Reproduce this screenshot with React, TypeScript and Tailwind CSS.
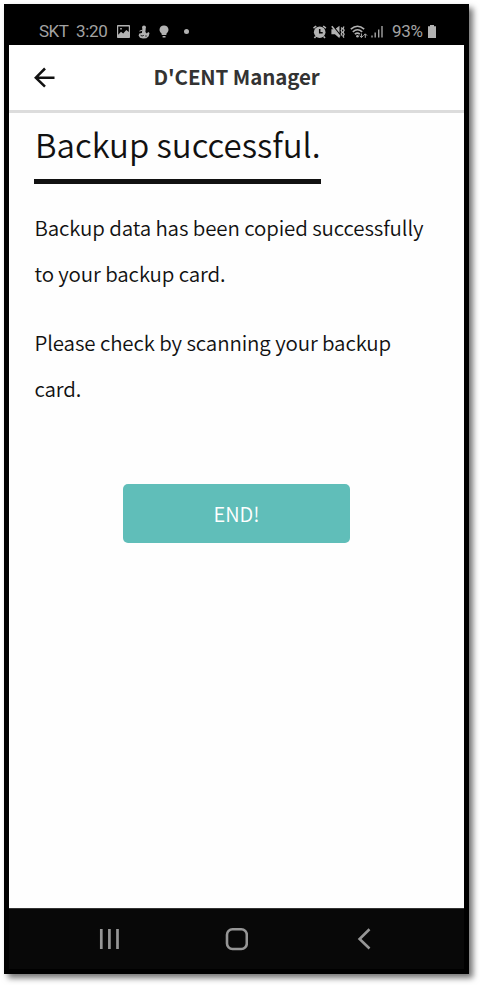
import type { ReactNode } from "react";

function Glyph({ w, h, className = "", children }: { w: number; h: number; className?: string; children: ReactNode }) {
  return (
    <svg width={w} height={h} viewBox={`0 0 ${w} ${h}`} className={`block shrink-0 ${className}`} fill="none">
      {children}
    </svg>
  );
}

function StatusBar() {
  return (
    <div className="flex h-9 shrink-0 items-center pt-[9px] pl-[30px] font-['Roboto',sans-serif] text-[17px] leading-none text-[#a3a3a3]">
      <span className="w-[37px] whitespace-nowrap tracking-[-0.5px]">SKT</span>
      <span className="w-[41px] whitespace-nowrap tracking-[-0.3px]">3:20</span>
      <Glyph w={13} h={13}>
        <path fillRule="evenodd" fill="#b2b2b2" d="M.8 0h11.400q.8 0 .8.8v11.400q0 .8-.8.8H.8q-.8 0-.8-.8V.8Q0 0 .8 0ZM1.200 1.400v8.400L4 6.800l2.200 1.800 3.100-3.700 2.500 2V1.400ZM3.200 3h1.600v1.600H3.200Z" />
      </Glyph>
      <Glyph w={12} h={14} className="ml-[8px]">
        <circle cx="6" cy="2.400" r="2" fill="#b2b2b2" />
        <path fill="#b2b2b2" d="m4.500 3.500 3.200.3-.3 3.300 1.300 1.400 1.500-1.500 1.300 1-.8 3.300-2.300 1.900-3.400.4-3-.9L.6 10.500l.7-1.900 2.600-.7Z" />
        <path d="M1.500 6.200 4.700 5" stroke="#b2b2b2" strokeWidth="1" />
        <path d="M2.600 10.300q1.400 1.400 3.200.1M7.200 11h1.600" stroke="#111" strokeWidth=".9" />
      </Glyph>
      <Glyph w={10} h={14} className="ml-[9px]">
        <path fill="#b2b2b2" d="M5 .4a4.400 4.400 0 0 1 4.500 4.300c0 2-1.300 2.900-2.100 4v1.300H2.700V8.700C1.800 7.600.5 6.700.5 4.700A4.400 4.400 0 0 1 5 .4ZM3.600 11h2.900v1.500H3.600Z" />
      </Glyph>
      <span className="ml-[15px] size-[5px] rounded-full bg-[#b2b2b2]" />
      <Glyph w={14} h={14} className="ml-[124px]">
        <circle cx="6.700" cy="7.200" r="5.800" fill="#b2b2b2" />
        <path d="M.5 3.200 3.200 1M12.900 3.200 10.200 1M2.700 11.500l-1.300 1.600M10.700 11.500l1.300 1.600" stroke="#b2b2b2" strokeWidth="1.600" />
        <path d="M6.700 4v3.700h3" stroke="#050505" strokeWidth="1.500" />
      </Glyph>
      <Glyph w={14} h={14} className="ml-[4px]">
        <path fill="#b2b2b2" d="M.4 4.200h2.500l5.600 6.500v2.500L3.900 9.200H.4ZM4.800 3.500 8.500.8v7.200Z" />
        <path d="M.8 1.200 9 11.500" stroke="#b2b2b2" strokeWidth="1.600" />
        <path d="m10.200 2.500 1 1.300-1 1.700 1 1.700-1 1.700 1 1.700M13 1.500l-.9 1.800 1 2-1 2 1 2-1 2 .9 1.300" stroke="#b2b2b2" strokeWidth="1.300" />
      </Glyph>
      <Glyph w={18} h={14} className="ml-[5px]">
        <path d="M.8 4.200Q7.500-1.700 14.200 4.200M2.800 6.800Q7.500 2.700 12.200 6.800M4.800 9.200q2.700-2.200 5 0" stroke="#b2b2b2" strokeWidth="1.600" />
        <circle cx="7.500" cy="11.300" r="1.300" fill="#b2b2b2" />
        <path d="M11.400 8.500v3.800m-1.700-1.600 1.700 1.900 1.700-1.900M15.300 12.800V9m-1.700 1.600 1.700-1.800L17 10.600" stroke="#b2b2b2" strokeWidth="1" />
      </Glyph>
      <Glyph w={12} h={13} className="ml-[3px]">
        <path d="M1 10.500v2M4.200 7.500v5M7.700 4.500v8M11 1v11.500" stroke="#a3a3a3" strokeWidth="1.400" />
      </Glyph>
      <span className="ml-[9px] w-[36px] whitespace-nowrap tracking-[-0.3px]">93%</span>
      <Glyph w={8} h={13}>
        <path fill="#b2b2b2" d="M2 0h4v1.200h2V13H0V1.200h2Z" />
      </Glyph>
    </div>
  );
}

export default function App() {
  return (
    <div className="h-[985px] w-[480px] overflow-hidden bg-white pt-1 pl-1 font-['Noto_Sans_CJK_KR',sans-serif]">
      <div className="flex h-[970px] w-[465px] flex-col border-[5px] border-black bg-black shadow-[4px_4px_6px_0px_rgba(0,0,0,0.55)]">
        <StatusBar />

        <main className="flex grow flex-col bg-[#fefefe] text-[#111]">
          <header className="flex h-[68px] shrink-0 items-center border-b-[3px] border-[#dcdcdc] bg-white">
            <Glyph w={22} h={22} className="ml-[25px]">
              <path d="M11 1.500 1.800 10.700l9.200 9M1.800 10.700H20.500" stroke="#111" strokeWidth="2.500" />
            </Glyph>
            <h1 className="ml-[97.5px] pb-0.5 whitespace-nowrap text-[20.5px] leading-none font-bold tracking-[-0.12px] text-[#333]">D'CENT Manager</h1>
          </header>

          <div className="flex flex-col px-[25px]">
            <h2 className="h-[71px] w-[287px] border-b-[5px] border-[#111] pl-px text-[33px] leading-[63px] font-[350] whitespace-nowrap">
              Backup successful.
            </h2>
            <div className="mt-[20px] flex flex-col gap-[23px] pl-[0.5px] text-[20.5px] leading-[46px] font-[350] tracking-[-0.12px] whitespace-nowrap">
              <p>
                Backup data has been copied successfully
                <br />
                to your backup card.
              </p>
              <p>
                Please check by scanning your backup
                <br />
                card.
              </p>
            </div>
            <button className="mt-[73px] ml-[89px] h-[59px] w-[227px] rounded-[5px] bg-[#60beb9] text-[20px] leading-[59px] font-[350] text-white">
              END!
            </button>
          </div>
        </main>

        <nav className="flex h-[61px] shrink-0 items-center border-t border-[#333] bg-[#080808] pl-[90px]">
          <Glyph w={22} h={22}>
            <path d="M2.300 1v20M10.400 1v20M18.500 1v20" stroke="#969696" strokeWidth="2.700" />
          </Glyph>
          <Glyph w={24} h={24} className="ml-[103px]">
            <rect x="3" y="2.200" width="19.800" height="19.800" rx="5.500" stroke="#969696" strokeWidth="2.600" />
          </Glyph>
          <Glyph w={14} h={22} className="ml-[109px]">
            <path d="m12.500 1.300-9.900 9.700 9.900 9.500" stroke="#969696" strokeWidth="2.600" />
          </Glyph>
        </nav>
      </div>
    </div>
  );
}
